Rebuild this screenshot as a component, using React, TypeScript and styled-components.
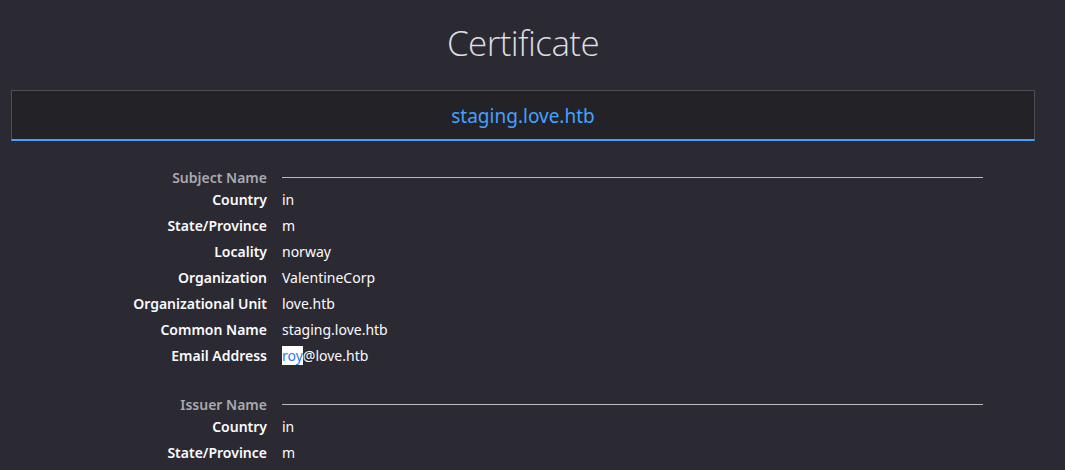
import React from "react";
import styled, { createGlobalStyle } from "styled-components";

const Global = createGlobalStyle`
  html, body {
    margin: 0;
    padding: 0;
    background: #2b2a33;
    color: #fbfbfe;
    font-family: "Noto Sans", "Open Sans", sans-serif;
  }
`;

const Page = styled.div`
  display: flex;
  flex-direction: column;
  width: 1046px;
  padding-top: 17px;
`;

const Title = styled.h1`
  margin: 0;
  text-align: center;
  font-family: "Open Sans", "Noto Sans", sans-serif;
  font-weight: 300;
  font-size: 35px;
  letter-spacing: -0.6px;
  line-height: 52px;
  color: #dcdce2;
`;

const TabBar = styled.div`
  margin: 21px 11px 0 11px;
  box-sizing: border-box;
  height: 51px;
  background: #232327;
  border: 1px solid #4d4d54;
  border-bottom: 2px solid #45a1ff;
  display: flex;
  align-items: center;
  justify-content: center;
  padding-top: 2px;
`;

const TabLabel = styled.span`
  color: #45a1ff;
  font-size: 19px;
`;

const Info = styled.div`
  display: grid;
  grid-template-columns: 267px 1fr;
  column-gap: 15px;
  width: 983px;
  margin-top: 26px;
`;

const SectionTitle = styled.div<{ $first?: boolean }>`
  grid-column: 1;
  text-align: right;
  color: #a9a9b0;
  font-weight: 600;
  font-size: 14px;
  line-height: 21px;
  margin-top: ${(p) => (p.$first ? "0" : "24px")};
`;

const SectionRule = styled.div<{ $first?: boolean }>`
  grid-column: 2;
  display: flex;
  align-items: center;
  margin-top: ${(p) => (p.$first ? "0" : "24px")};
  &::after {
    content: "";
    flex: 1;
    height: 1px;
    background: #b8b8bd;
  }
`;

const Label = styled.div`
  grid-column: 1;
  text-align: right;
  font-weight: 600;
  font-size: 14px;
  line-height: 26px;
  margin-top: -1px;
  margin-bottom: 1px;
  color: #fbfbfe;
`;

const Value = styled.div`
  grid-column: 2;
  font-size: 14px;
  line-height: 26px;
  margin-top: -1px;
  margin-bottom: 1px;
  color: #fbfbfe;
`;

const Selected = styled.span`
  background: #ffffff;
  color: #2b7de9;
`;

const subject: [string, React.ReactNode][] = [
  ["Country", "in"],
  ["State/Province", "m"],
  ["Locality", "norway"],
  ["Organization", "ValentineCorp"],
  ["Organizational Unit", "love.htb"],
  ["Common Name", "staging.love.htb"],
  [
    "Email Address",
    <>
      <Selected>roy</Selected>@love.htb
    </>,
  ],
];

const issuer: [string, React.ReactNode][] = [
  ["Country", "in"],
  ["State/Province", "m"],
];

export default function App() {
  return (
    <Page>
      <Global />
      <Title>Certificate</Title>
      <TabBar>
        <TabLabel>staging.love.htb</TabLabel>
      </TabBar>
      <Info>
        <SectionTitle $first>Subject Name</SectionTitle>
        <SectionRule $first />
        {subject.map(([k, v]) => (
          <React.Fragment key={"s" + k}>
            <Label>{k}</Label>
            <Value>{v}</Value>
          </React.Fragment>
        ))}
        <SectionTitle>Issuer Name</SectionTitle>
        <SectionRule />
        {issuer.map(([k, v]) => (
          <React.Fragment key={"i" + k}>
            <Label>{k}</Label>
            <Value>{v}</Value>
          </React.Fragment>
        ))}
      </Info>
    </Page>
  );
}
